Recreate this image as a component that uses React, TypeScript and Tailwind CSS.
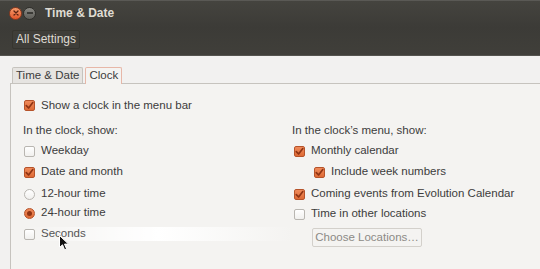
import React from 'react';

function CheckBox({ checked }: { checked: boolean }) {
  if (checked) {
    return (
      <span className="w-[11px] h-[11px] rounded-[2px] border border-[#b6532a] bg-gradient-to-b from-[#ef8a5a] to-[#de6a35] flex items-center justify-center shrink-0">
        <svg width="9" height="9" viewBox="0 0 9 9">
          <path d="M1.3 4.6 L3.6 7 L7.8 1.6" fill="none" stroke="#8f3414" strokeWidth="1.7" strokeLinecap="round" strokeLinejoin="round" />
        </svg>
      </span>
    );
  }
  return <span className="w-[11px] h-[11px] rounded-[2px] border border-[#b9b6b1] bg-gradient-to-b from-white to-[#f1f0ee] shrink-0" />;
}

function Radio({ checked }: { checked: boolean }) {
  if (checked) {
    return (
      <span className="w-[11px] h-[11px] rounded-full border border-[#b6532a] bg-gradient-to-b from-[#ef8a5a] to-[#de6a35] flex items-center justify-center shrink-0">
        <span className="w-[5px] h-[5px] rounded-full bg-[#8f3414]" />
      </span>
    );
  }
  return <span className="w-[11px] h-[11px] rounded-full border border-[#b9b6b1] bg-gradient-to-b from-white to-[#f1f0ee] shrink-0" />;
}

function Option({ label, checked, radio = false, className = '' }: { label: string; checked: boolean; radio?: boolean; className?: string }) {
  return (
    <div className={`flex items-center gap-[6px] whitespace-nowrap ${className}`}>
      {radio ? <Radio checked={checked} /> : <CheckBox checked={checked} />}
      <span>{label}</span>
    </div>
  );
}

export default function App() {
  return (
    <div
      className="w-[540px] h-[269px] overflow-hidden bg-[#f2f1f0] text-[11.5px] text-[#3c3c3c] flex flex-col"
      style={{ fontFamily: '"Liberation Sans", Arial, sans-serif' }}
    >
      {/* Title bar + toolbar */}
      <div className="h-[56px] shrink-0 bg-gradient-to-b from-[#45443f] via-[#3c3b37] to-[#403f3a] border-b border-[#55544f] flex flex-col">
        <div className="h-[25px] flex items-center pl-[9px] border-t border-[#5a5955]">
          <span className="w-[13px] h-[13px] rounded-full bg-gradient-to-b from-[#f59a6a] to-[#e0552a] border border-[#8c3a1f] flex items-center justify-center">
            <svg width="6" height="6" viewBox="0 0 6 6">
              <path d="M1 1 L5 5 M5 1 L1 5" stroke="#5a2312" strokeWidth="1.3" strokeLinecap="round" />
            </svg>
          </span>
          <span className="w-[13px] h-[13px] rounded-full bg-gradient-to-b from-[#8a8984] to-[#5e5d58] border border-[#2f2e2a] flex items-center justify-center ml-[1px]">
            <span className="w-[6px] h-[1.5px] bg-[#3a3935]" />
          </span>
          <span className="ml-[9px] font-bold text-[12px] text-[#dfdbd2]">Time &amp; Date</span>
        </div>
        <div className="flex-1 flex items-center pl-[12px] pb-[2px]">
          <span className="h-[19px] px-[3px] flex items-center text-[12px] text-[#dfdbd2] border border-[#36352f] rounded-[2px] bg-[#3f3e39]">
            All Settings
          </span>
        </div>
      </div>

      {/* Notebook */}
      <div className="flex-1 pt-[11px] pl-[10px] flex flex-col">
        <div className="flex items-end h-[16px] pl-[2px]">
          <div className="h-[16px] px-[3px] flex items-center bg-[#e6e4e1] border border-b-0 border-[#c6c3be] rounded-t-[2px]">
            Time &amp; Date
          </div>
          <div className="h-[17px] ml-[2px] px-[3px] flex items-center bg-[#f4f3f1] border border-b-0 border-[#e7b7a8] rounded-t-[2px] -mb-px relative z-10">
            Clock
          </div>
        </div>
        <div className="flex-1 border-t border-l border-[#c6c3be] bg-[#f4f3f1] pl-[12px] flex flex-col relative">
          <div className="h-[21px] mt-[11px] flex items-center">
            <Option label="Show a clock in the menu bar" checked className="pl-[1px]" />
          </div>
          <div className="flex mt-[5px]">
            {/* left column */}
            <div className="w-[269px] flex flex-col">
              <div className="h-[20px] flex items-center">In the clock, show:</div>
              <Option label="Weekday" checked={false} className="h-[20px] pl-[1px]" />
              <Option label="Date and month" checked className="h-[22px] pl-[1px]" />
              <Option label="12-hour time" checked={false} radio className="h-[22px] pl-[1px]" />
              <Option label="24-hour time" checked radio className="h-[16px] pl-[1px]" />
              <div className="h-[26px] flex items-center">
                <div className="h-[14px] w-full flex items-center bg-gradient-to-r from-transparent via-white to-[#f4f3f1]">
                  <Option label="Seconds" checked={false} className="pl-[1px] text-[#555]" />
                </div>
              </div>
            </div>
            {/* right column */}
            <div className="flex flex-col">
              <div className="h-[20px] flex items-center">In the clock’s menu, show:</div>
              <Option label="Monthly calendar" checked className="h-[20px] pl-[2px]" />
              <Option label="Include week numbers" checked className="h-[22px] pl-[22px]" />
              <Option label="Coming events from Evolution Calendar" checked className="h-[22px] pl-[2px]" />
              <Option label="Time in other locations" checked={false} className="h-[18px] pl-[2px]" />
              <div className="mt-[5px] pl-[20px]">
                <span className="h-[19px] w-[110px] whitespace-nowrap flex items-center justify-center border border-[#d3d0cb] rounded-[2px] bg-[#f4f3f1] text-[#8c8a86]">
                  Choose Locations…
                </span>
              </div>
            </div>
          </div>

          {/* mouse pointer */}
          <svg className="absolute left-[48px] top-[151px]" width="11" height="16" viewBox="0 0 11 16">
            <path d="M0.5 0.5 L0.5 12.5 L3.5 9.8 L5.6 14.8 L7.6 13.9 L5.5 9.1 L9.5 9.1 Z" fill="#111" stroke="#fff" strokeWidth="1" strokeLinejoin="round" />
          </svg>
        </div>
      </div>
    </div>
  );
}
